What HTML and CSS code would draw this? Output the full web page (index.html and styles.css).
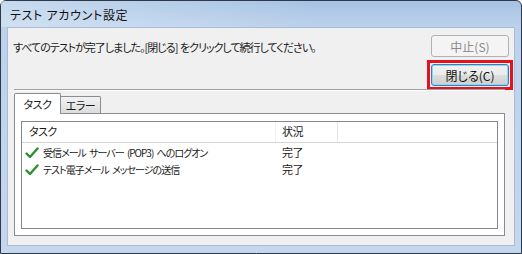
FILE: index.html
```html
<!DOCTYPE html>
<html lang="ja">
<head>
<meta charset="utf-8">
<link rel="stylesheet" href="styles.css">
</head>
<body>
<div class="window">
  <div class="titlebar">テスト アカウント設定</div>
  <div class="client">
    <div class="top">
      <p class="msg">すべてのテストが完了しました。[閉じる] をクリックして続行してください。</p>
      <div class="buttons">
        <button class="btn" disabled>中止(S)</button>
        <div class="mark"><button class="btn default">閉じる(C)</button></div>
      </div>
    </div>
    <div class="sep"></div>
    <div class="tabs">
      <div class="tab active">タスク</div>
      <div class="tab">エラー</div>
    </div>
    <div class="panel">
      <div class="list">
        <div class="header">
          <div class="col c1">タスク</div>
          <div class="col c2">状況</div>
          <div class="col c3"></div>
        </div>
        <div class="row">
          <div class="cell c1"><svg class="check" viewBox="0 0 14 12" width="14" height="12"><path d="M1.5 6.5 L5 10 L12.5 1.5" fill="none" stroke="#2f8f2f" stroke-width="2.4" stroke-linecap="round" stroke-linejoin="round"/></svg><span>受信メール サーバー (POP3) へのログオン</span></div>
          <div class="cell c2">完了</div>
        </div>
        <div class="row">
          <div class="cell c1"><svg class="check" viewBox="0 0 14 12" width="14" height="12"><path d="M1.5 6.5 L5 10 L12.5 1.5" fill="none" stroke="#2f8f2f" stroke-width="2.4" stroke-linecap="round" stroke-linejoin="round"/></svg><span>テスト電子メール メッセージの送信</span></div>
          <div class="cell c2">完了</div>
        </div>
      </div>
    </div>
  </div>
</div>
</body>
</html>
```

FILE: styles.css
```css
* { box-sizing: border-box; }
html, body {
  margin: 0;
  padding: 0;
  width: 522px;
  height: 254px;
  overflow: hidden;
  background: #ffffff;
}
body {
  font-family: "Noto Sans CJK JP", "Noto Sans", sans-serif;
  font-size: 11px;
  color: #1a1a1a;
  font-feature-settings: "palt";
}
.window {
  width: 522px;
  height: 254px;
  border: 1px solid #2e3846;
  border-radius: 6px 6px 0 0;
  background: linear-gradient(to bottom, #a6c2e2 0px, #bcd2ec 26px, #c3d8ef 100%);
  padding: 0 6px 7px 6px;
  display: flex;
  flex-direction: column;
}
.titlebar {
  height: 26px;
  line-height: 28px;
  font-size: 12px;
  letter-spacing: 0.7px;
  color: #111;
  background: linear-gradient(to right, rgba(225,236,248,0.55), rgba(225,236,248,0) 60%);
  margin: 0 -6px;
  padding-left: 9px;
}
.client {
  flex: 1;
  background: #f0f0f0;
  border: 1px solid #aabbd3;
  padding: 0 5px 0 5px;
  display: flex;
  flex-direction: column;
}
.top {
  display: flex;
  justify-content: space-between;
  align-items: flex-start;
  padding-top: 7px;
}
.msg {
  margin: 4px 0 0 0;
  line-height: 16px;
  letter-spacing: -1px;
  word-spacing: 1px;
}
.buttons {
  display: flex;
  flex-direction: column;
  align-items: center;
  gap: 3px;
  width: 78px;
}
.btn {
  font-family: inherit;
  font-size: 12px;
  font-feature-settings: "palt";
  height: 22px;
  width: 78px;
  padding: 0;
  border-radius: 3px;
  border: 1px solid #707070;
  background: linear-gradient(to bottom, #f2f2f2 0%, #ebebeb 50%, #dddddd 51%, #cfcfcf 100%);
  color: #111;
}
.btn:disabled {
  border-color: #adb2b5;
  background: #f4f4f4;
  color: #8a8a8a;
}
.mark {
  border: 3px solid #e2131e;
  padding: 1px;
}
.btn.default {
  display: block;
  border-color: #3c7fb1;
  box-shadow: inset 0 0 0 1px #7fdcff;
}
.sep {
  margin: 0 4px 0 1px;
  height: 2px;
  border-top: 1px solid #a0a0a0;
  border-bottom: 1px solid #ffffff;
  position: relative;
  top: -1px;
}
.tabs {
  display: flex;
  align-items: flex-end;
  margin-top: 1px;
  padding-left: 1px;
  height: 20px;
  position: relative;
  z-index: 1;
}
.tab {
  height: 17px;
  width: 40px;
  text-align: center;
  white-space: nowrap;
  letter-spacing: -0.5px;
  border: 1px solid #898c95;
  border-bottom: none;
  border-left: none;
  background: linear-gradient(to bottom, #f3f3f3, #dcdcdc);
  line-height: 16px;
  border-radius: 0 2px 0 0;
}
.tab.active {
  width: 47px;
  height: 21px;
  border-left: 1px solid #898c95;
  border-radius: 2px 2px 0 0;
  background: #ffffff;
  line-height: 20px;
  margin-bottom: -1px;
}
.panel {
  margin: 0 4px 0 1px;
  height: 123px;
  background: #ffffff;
  border: 1px solid #898c95;
  padding: 7px 6px 6px 6px;
}
.list {
  height: 100%;
  border: 1px solid #828790;
  background: #fff;
}
.header {
  display: flex;
  height: 21px;
  border-bottom: 1px solid #d5d5d5;
  line-height: 19px;
  padding-top: 1px;
  letter-spacing: -0.6px;
}
.col { border-right: 1px solid #e3e4e6; margin-top: -1px; }
.c1 { width: 254px; padding-left: 7px; }
.c2 { width: 62px; padding-left: 6px; }
.col.c1 { border-right-color: #f0f0f0; }
.c3 { flex: 1; border-right: none; }
.row {
  display: flex;
  height: 17px;
  line-height: 16px;
  font-size: 10px;
  letter-spacing: -1px;
  word-spacing: 2px;
}
.header + .row { margin-top: 1px; }
.cell.c1 {
  padding-left: 3px;
  display: flex;
  align-items: center;
  gap: 4px;
  white-space: nowrap;
}
.cell.c2 { font-size: 11px; letter-spacing: -0.6px; }
.check { flex: none; }
```
